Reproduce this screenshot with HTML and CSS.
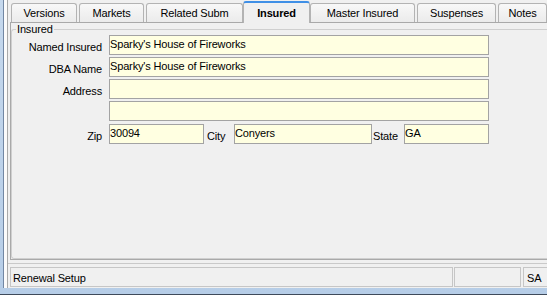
FILE: index.html
```html
<!DOCTYPE html>
<html lang="en">
<head>
    <meta charset="UTF-8">
    <title>Submission - Insured</title>
    <link rel="stylesheet" href="styles.css">
</head>
<body>

    <div class="window">
        <div class="client">

            <!-- Tab strip -->
            <div class="tabs">
                <div class="tab">Versions</div>
                <div class="tab">Markets</div>
                <div class="tab">Related Subm</div>
                <div class="tab active">Insured</div>
                <div class="tab">Master Insured</div>
                <div class="tab">Suspenses</div>
                <div class="tab">Notes</div>
            </div>

            <!-- Insured tab -->
            <div class="tab-panel">
                <fieldset class="group">
                    <legend>Insured</legend>
                    <div class="form">
                        <label class="label">Named Insured</label>
                        <input class="field" type="text" value="Sparky's House of Fireworks">

                        <label class="label">DBA Name</label>
                        <input class="field" type="text" value="Sparky's House of Fireworks">

                        <label class="label">Address</label>
                        <input class="field" type="text" value="">

                        <span></span>
                        <input class="field" type="text" value="">

                        <label class="label spaced">Zip</label>
                        <div class="zip-row spaced">
                            <input class="field zip" type="text" value="30094">
                            <label class="inline-label city-label">City</label>
                            <input class="field city" type="text" value="Conyers">
                            <label class="inline-label state-label">State</label>
                            <input class="field state" type="text" value="GA">
                        </div>
                    </div>
                </fieldset>
            </div>

            <!-- Status bar -->
            <div class="statusbar">
                <div class="cell cell-main">Renewal Setup</div>
                <div class="cell cell-blank"></div>
                <div class="cell cell-user">SA</div>
            </div>

        </div>
    </div>

</body>
</html>
```

FILE: styles.css
```css
html, body {
    overflow: hidden;
}

body {
    margin: 0;
    background-color: #fff;
    font-family: "Liberation Sans", Arial, sans-serif;
    font-size: 11px;
    letter-spacing: -0.15px;
    color: #000;
}

/* Window frame (right edge is cut off in this view) */
.window {
    width: 547px;
    box-sizing: border-box;
    padding: 0 0 6px 3px;
    background: linear-gradient(to bottom, #c5d8ed, #b6cde7);
    border-bottom: 1px solid #3e4a5a;
    box-shadow: 1px 2px 5px rgba(0, 0, 0, 0.5);
}

.client {
    height: 288px;
    box-sizing: border-box;
    padding-left: 4px;
    background-color: #f0f0f0;
    border-left: 1px solid #7287a3;
    box-shadow: inset 3px 0 0 #fbfbfb, inset 4px 0 0 #a9a9a9;
}

/* Tabs */
.tabs {
    display: grid;
    grid-template-columns: 66px 65px 97px 63px 105px 79px 49px;
    column-gap: 2px;
    align-items: end;
    height: 22px;
    padding-left: 3px;
}

.tab {
    height: 19px;
    box-sizing: border-box;
    padding-top: 3px;
    border: 1px solid #b3b3b3;
    border-bottom: none;
    border-radius: 3px 3px 0 0;
    background: linear-gradient(to bottom, #f8f8f8, #ebebeb);
    line-height: 13px;
    text-align: center;
    white-space: nowrap;
}

.tab.active {
    position: relative;
    z-index: 1;
    height: 22px;
    margin: 0 -2px -1px;
    padding-top: 4px;
    border-top: 2px solid #3f8fe6;
    background: #f0f0f0;
    font-weight: bold;
}

.tab-panel {
    height: 238px;
    box-sizing: border-box;
    margin-left: 2px;
    border: 1px solid #a9a9a9;
    border-right: none;
}

/* Group box */
.group {
    height: 236px;
    box-sizing: border-box;
    margin: 0;
    padding: 0;
    min-width: 0;
    border: 1px solid #cfcfcf;
    border-right: none;
    border-radius: 3px 0 0 3px;
}

.group legend {
    margin-left: 4px;
    padding: 0 1px;
    line-height: 13px;
}

.form {
    display: grid;
    grid-template-columns: 90px 380px;
    grid-auto-rows: 20px;
    column-gap: 7px;
    row-gap: 2px;
    margin-top: -1px;
}

.label {
    padding-top: 6px;
    line-height: 13px;
    text-align: right;
    white-space: nowrap;
}

.spaced {
    margin-top: 1px;
}

.field {
    width: 100%;
    height: 20px;
    box-sizing: border-box;
    margin: 0;
    padding: 1px 0 4px 0;
    border: 1px solid #a3a3a3;
    border-radius: 0;
    background-color: #ffffe1;
    font: inherit;
    letter-spacing: inherit;
    color: #000;
    outline: none;
}

.zip-row {
    display: flex;
}

.zip-row .field {
    flex: none;
}

.inline-label {
    flex: none;
    padding-top: 6px;
    line-height: 13px;
    white-space: nowrap;
}

.zip { width: 95px; }
.city-label { width: 27px; margin-left: 3px; }
.city { width: 138px; }
.state-label { width: 31px; margin-left: 1px; }
.state { width: 85px; }

/* Status bar */
.statusbar {
    display: flex;
    margin-top: 3px;
    padding: 3px 0 0 2px;
    border-top: 1px solid #c9c9c9;
}

.cell {
    flex: none;
    height: 20px;
    box-sizing: border-box;
    padding: 4px 0 0 2px;
    border: 1px solid #c6c6c6;
    line-height: 13px;
    white-space: nowrap;
}

.cell-main { width: 443px; }
.cell-blank { width: 67px; margin-left: 1px; }
.cell-user { flex: 1; margin-left: 2px; padding-left: 3px; border-right: none; }
```
